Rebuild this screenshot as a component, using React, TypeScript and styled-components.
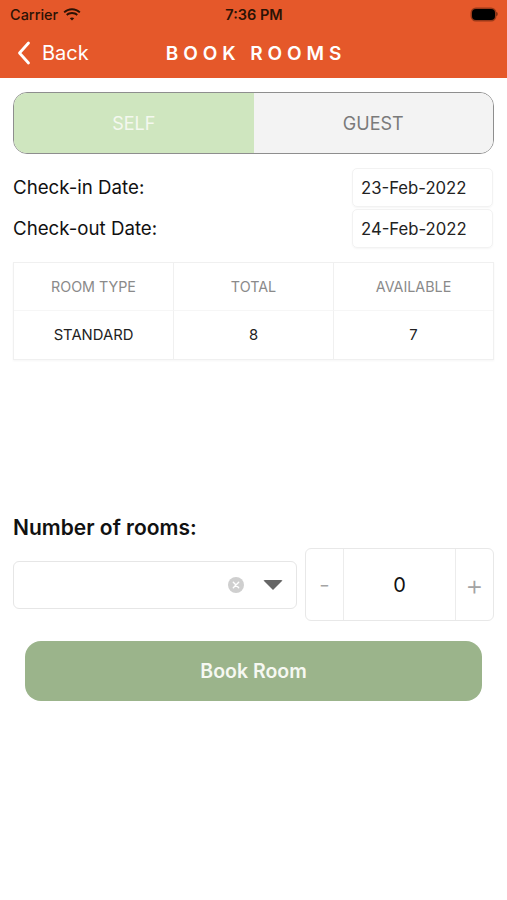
import React from "react";
import styled, { createGlobalStyle } from "styled-components";

const GlobalStyle = createGlobalStyle`
  html, body {
    margin: 0;
    padding: 0;
    background: #ffffff;
  }
  body {
    font-family: Inter, "Liberation Sans", Arial, sans-serif;
    color: #111;
  }
`;

const rooms = [{ type: "STANDARD", total: 8, available: 7 }];

export default function App() {
  return (
    <>
      <GlobalStyle />
      <Screen>
        <Header>
          <StatusBar>
            <Carrier>
              Carrier
              <svg width="18" height="13" viewBox="0 0 18 13">
                <path d="M9 2.2c2.8 0 5.3 1.1 7.2 2.9l1.3-1.4C15.3 1.6 12.3.3 9 .3S2.7 1.6.5 3.7l1.3 1.4C3.7 3.3 6.2 2.2 9 2.2z" fill="#2a1205" />
                <path d="M9 5.9c1.8 0 3.4.7 4.6 1.8l1.3-1.4C13.4 4.9 11.3 4 9 4s-4.4.9-5.9 2.3l1.3 1.4C5.6 6.6 7.2 5.9 9 5.9z" fill="#2a1205" />
                <path d="M9 9.4c.9 0 1.6.3 2.2.9L9 12.6 6.8 10.3c.6-.6 1.3-.9 2.2-.9z" fill="#2a1205" />
              </svg>
            </Carrier>
            <Clock>7:36 PM</Clock>
            <Battery>
              <BatteryBody />
              <BatteryCap />
            </Battery>
          </StatusBar>
          <NavBar>
            <BackButton>
              <svg width="14" height="24" viewBox="0 0 14 24">
                <path d="M11.5 2 2.5 12l9 10" fill="none" stroke="#fff" strokeWidth="2.8" strokeLinecap="round" strokeLinejoin="round" />
              </svg>
              Back
            </BackButton>
            <Title>BOOK ROOMS</Title>
          </NavBar>
        </Header>

        <Content>
          <Segmented>
            <Segment $active>SELF</Segment>
            <Segment>GUEST</Segment>
          </Segmented>

          <DateRows>
            <DateRow>
              <DateLabel>Check-in Date:</DateLabel>
              <DateBox>23-Feb-2022</DateBox>
            </DateRow>
            <DateRow>
              <DateLabel>Check-out Date:</DateLabel>
              <DateBox>24-Feb-2022</DateBox>
            </DateRow>
          </DateRows>

          <Table>
            <HeadCell>ROOM TYPE</HeadCell>
            <HeadCell>TOTAL</HeadCell>
            <HeadCell $last>AVAILABLE</HeadCell>
            {rooms.map((r) => (
              <React.Fragment key={r.type}>
                <BodyCell>{r.type}</BodyCell>
                <BodyCell>{r.total}</BodyCell>
                <BodyCell $last>{r.available}</BodyCell>
              </React.Fragment>
            ))}
          </Table>

          <RoomsLabel>Number of rooms:</RoomsLabel>
          <RoomsRow>
            <Select>
              <ClearIcon>
                <svg width="16" height="16" viewBox="0 0 16 16">
                  <circle cx="8" cy="8" r="8" fill="#cfcfcf" />
                  <path d="M5.3 5.3l5.4 5.4M10.7 5.3l-5.4 5.4" stroke="#fff" strokeWidth="1.4" strokeLinecap="round" />
                </svg>
              </ClearIcon>
              <Caret />
            </Select>
            <Stepper>
              <StepButton>-</StepButton>
              <StepValue>0</StepValue>
              <StepButton $plus>+</StepButton>
            </Stepper>
          </RoomsRow>

          <BookButton>Book Room</BookButton>
        </Content>
      </Screen>
    </>
  );
}

const Screen = styled.div`
  width: 507px;
  min-height: 900px;
  background: #fff;
`;

const Header = styled.div`
  background: #e5582a;
  height: 78px;
  display: flex;
  flex-direction: column;
`;

const StatusBar = styled.div`
  height: 28px;
  display: grid;
  grid-template-columns: 1fr auto 1fr;
  align-items: center;
  padding: 0 9px 0 10px;
  font-size: 14.5px;
  font-weight: 500;
  color: #2a1205;
`;

const Carrier = styled.div`
  display: flex;
  align-items: center;
  gap: 5px;
`;

const Clock = styled.div`
  font-weight: 600;
  font-size: 14.5px;
`;

const Battery = styled.div`
  justify-self: end;
  display: flex;
  align-items: center;
  gap: 1px;
`;

const BatteryBody = styled.div`
  width: 23px;
  height: 11px;
  border-radius: 4px;
  background: #000;
  box-shadow: 0 0 0 1.5px rgba(60, 20, 5, 0.45);
`;

const BatteryCap = styled.div`
  width: 2px;
  height: 4px;
  border-radius: 0 2px 2px 0;
  background: rgba(60, 20, 5, 0.45);
`;

const NavBar = styled.div`
  flex: 1;
  position: relative;
  display: flex;
  align-items: center;
  justify-content: center;
`;

const BackButton = styled.div`
  position: absolute;
  left: 17px;
  top: 50%;
  transform: translateY(-50%);
  display: flex;
  align-items: center;
  gap: 11px;
  color: #fff;
  font-size: 20px;
`;

const Title = styled.div`
  color: #fff;
  font-size: 19px;
  font-weight: 600;
  letter-spacing: 4.9px;
  margin-left: 5px;
`;

const Content = styled.div`
  padding: 14px 13px 0 13px;
  display: flex;
  flex-direction: column;
`;

const Segmented = styled.div`
  height: 60px;
  display: grid;
  grid-template-columns: 1fr 1fr;
  border: 1px solid #8e8e8e;
  border-radius: 14px;
  overflow: hidden;
`;

const Segment = styled.div<{ $active?: boolean }>`
  display: flex;
  align-items: center;
  justify-content: center;
  font-size: 18px;
  background: ${({ $active }) => ($active ? "#cfe6bf" : "#f3f3f3")};
  color: ${({ $active }) => ($active ? "#f4f8ef" : "#7a7a7a")};
`;

const DateRows = styled.div`
  margin-top: 14px;
  display: flex;
  flex-direction: column;
  gap: 2px;
`;

const DateRow = styled.div`
  display: flex;
  align-items: center;
  justify-content: space-between;
`;

const DateLabel = styled.div`
  font-size: 18.7px;
  color: #111;
`;

const DateBox = styled.div`
  width: 141px;
  height: 39px;
  box-sizing: border-box;
  border: 1px solid #f2f2f2;
  border-radius: 5px;
  box-shadow: 0 1px 2px rgba(0, 0, 0, 0.04);
  display: flex;
  align-items: center;
  padding-left: 8px;
  font-size: 16.7px;
  color: #222;
  margin-right: 1px;
`;

const Table = styled.div`
  margin-top: 14px;
  display: grid;
  grid-template-columns: 160px 160px 1fr;
  grid-auto-rows: 48px;
  border: 1px solid #f0f0f0;
  box-shadow: 0 1px 2px rgba(0, 0, 0, 0.04);
`;

const HeadCell = styled.div<{ $last?: boolean }>`
  display: flex;
  align-items: center;
  justify-content: center;
  font-size: 14.3px;
  color: #8a8a8a;
  border-right: ${({ $last }) => ($last ? "none" : "1px solid #f0f0f0")};
  border-bottom: 1px solid #f6f6f6;
`;

const BodyCell = styled.div<{ $last?: boolean }>`
  display: flex;
  align-items: center;
  justify-content: center;
  font-size: 14.8px;
  color: #222;
  border-right: ${({ $last }) => ($last ? "none" : "1px solid #f0f0f0")};
`;

const RoomsLabel = styled.div`
  margin-top: 155px;
  font-size: 21px;
  font-weight: 600;
  color: #111;
`;

const RoomsRow = styled.div`
  margin-top: 8px;
  display: flex;
  align-items: center;
  gap: 8px;
`;

const Select = styled.div`
  width: 284px;
  height: 48px;
  box-sizing: border-box;
  border: 1px solid #e6e6e6;
  border-radius: 6px;
  display: flex;
  align-items: center;
  justify-content: flex-end;
  padding-right: 13px;
  gap: 19px;
`;

const ClearIcon = styled.div`
  display: flex;
`;

const Caret = styled.div`
  width: 0;
  height: 0;
  border-left: 10px solid transparent;
  border-right: 10px solid transparent;
  border-top: 10px solid #666;
  border-radius: 2px;
`;

const Stepper = styled.div`
  flex: 1;
  height: 73px;
  box-sizing: border-box;
  border: 1px solid #e8e8e8;
  border-radius: 6px;
  display: grid;
  grid-template-columns: 37px 1fr 37px;
`;

const StepButton = styled.div<{ $plus?: boolean }>`
  display: flex;
  align-items: center;
  justify-content: center;
  color: #a4a4a4;
  font-size: ${({ $plus }) => ($plus ? "28px" : "24px")};
  font-weight: 300;
`;

const StepValue = styled.div`
  display: flex;
  align-items: center;
  justify-content: center;
  font-size: 20px;
  color: #111;
  border-left: 1px solid #ececec;
  border-right: 1px solid #ececec;
`;

const BookButton = styled.div`
  margin: 20px 12px 0 12px;
  height: 60px;
  border-radius: 16px;
  background: #9bb48b;
  color: #f6f8f2;
  font-size: 19.5px;
  font-weight: 600;
  display: flex;
  align-items: center;
  justify-content: center;
`;
